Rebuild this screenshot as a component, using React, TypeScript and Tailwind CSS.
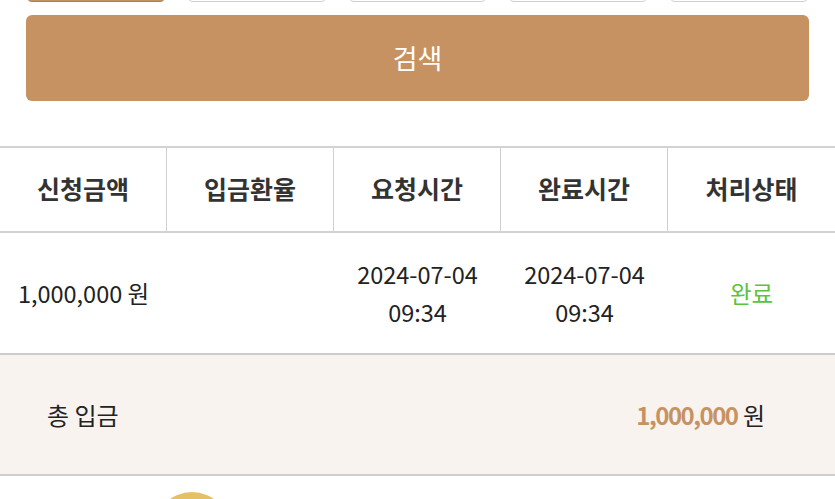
import React from 'react';

const tabs = ['전체', '대기', '처리중', '완료', '취소'];
const columns = ['신청금액', '입금환율', '요청시간', '완료시간', '처리상태'];

const App: React.FC = () => {
  return (
    <div
      className="w-[835px] h-[499px] overflow-hidden bg-white text-[#222]"
      style={{ fontFamily: '"Noto Sans CJK KR", "Noto Sans", sans-serif' }}
    >
      <div className="px-[26px]">
        {/* filter tabs, scrolled mostly out of view */}
        <div className="-mt-[38px] grid grid-cols-5 gap-[21px]">
          {tabs.map((t, i) => (
            <button
              key={t}
              aria-label={t}
              className={`h-[40px] rounded-[6px] border ${
                i === 0 ? 'border-[#a8805c] bg-[#c69262]' : 'border-[#cfcfcf] bg-white'
              }`}
            />
          ))}
        </div>
        <button className="mt-[13px] flex h-[86px] w-full items-center justify-center rounded-[6px] bg-[#c69262] text-[27px] text-white">
          검색
        </button>
      </div>

      <div className="mt-[45px] border-t-2 border-[#d2d2d2]">
        <div className="grid h-[85px] grid-cols-5 border-b-2 border-[#d2d2d2]">
          {columns.map((c, i) => (
            <div
              key={c}
              className={`flex items-center justify-center pb-[2px] text-[25px] font-bold text-[#333] ${
                i < 4 ? 'border-r border-[#cfcfcf]' : ''
              }`}
            >
              {c}
            </div>
          ))}
        </div>
        <div className="grid h-[120px] grid-cols-5 items-center text-center text-[23.5px] leading-[38px] text-[#222]">
          <div>1,000,000 원</div>
          <div></div>
          <div>
            2024-07-04
            <br />
            09:34
          </div>
          <div>
            2024-07-04
            <br />
            09:34
          </div>
          <div className="text-[#5ac43c]">완료</div>
        </div>
      </div>

      <div className="flex h-[123px] items-center justify-between border-y-2 border-[#d0cccb] bg-[#f8f3ef] pl-[47px] pr-[70px] text-[24px]">
        <span>총 입금</span>
        <span>
          <span className="font-semibold tracking-[-1.5px] text-[#c69262]">1,000,000</span> 원
        </span>
      </div>

      <div className="mt-[16px] pl-[154px]">
        <div className="h-[76px] w-[76px] rounded-full bg-[#e6c065]" />
      </div>
    </div>
  );
};

export default App;
